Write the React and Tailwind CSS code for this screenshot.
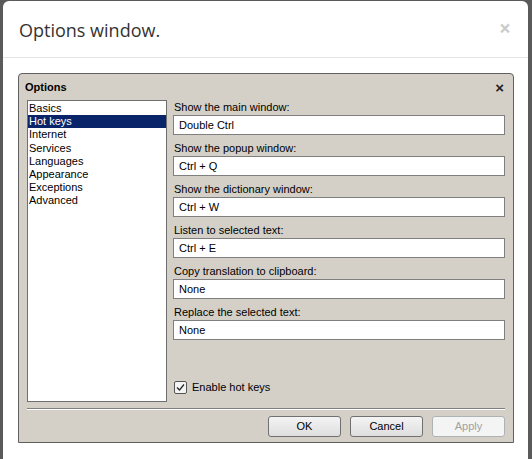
import { useState } from 'react';

const items = ['Basics', 'Hot keys', 'Internet', 'Services', 'Languages', 'Appearance', 'Exceptions', 'Advanced'];

const fields = [
    ['Show the main window:', 'Double Ctrl'],
    ['Show the popup window:', 'Ctrl + Q'],
    ['Show the dictionary window:', 'Ctrl + W'],
    ['Listen to selected text:', 'Ctrl + E'],
    ['Copy translation to clipboard:', 'None'],
    ['Replace the selected text:', 'None'],
];

const App = () => {
    const [selected, setSelected] = useState(1);
    const [enabled, setEnabled] = useState(true);

    return (
        <div className="w-[532px] h-[459px] bg-[#5a5a5a] overflow-hidden pt-[1px] pl-[3px]">
            <div className="w-[525px] h-[470px] bg-white rounded-[6px] font-['Open_Sans',sans-serif]">
                {/* Header */}
                <div className="h-[57px] border-b border-[#e5e5e5] px-[16px] flex items-center justify-between">
                    <h1 className="text-[18px] text-[#333] leading-[26px] mt-[2px]">Options window.</h1>
                    <span className="text-[21px] font-bold text-black opacity-20 leading-none mr-[1px] -mt-[1px]">×</span>
                </div>

                {/* Body */}
                <div className="p-[15px]">
                    <div className="w-[496px] h-[370px] bg-[#d4d0c8] border border-[#5f5f5f] rounded-t-[4px] flex flex-col font-['Liberation_Sans',Arial,sans-serif] text-[11px] text-black">
                        <div className="h-[26px] flex items-center justify-between pl-[6px] pr-[9px]">
                            <span className="font-bold">Options</span>
                            <span className="font-bold text-[15px] leading-none text-[#222]">×</span>
                        </div>

                        <div className="flex px-[8px] gap-[6px]">
                            <ul className="w-[140px] h-[302px] bg-white border border-[#6f6f6f] pt-[1px]">
                                {items.map((it, i) => (
                                    <li
                                        key={it}
                                        onClick={() => setSelected(i)}
                                        className={`h-[13.2px] leading-[13px] px-[1px] ${selected === i ? 'bg-[#0a246a] text-white' : ''}`}
                                    >
                                        {it}
                                    </li>
                                ))}
                            </ul>

                            <div className="flex-1 flex flex-col">
                                {fields.map(([label, value]) => (
                                    <div key={label} className="mb-[6px]">
                                        <div className="h-[14px] leading-[14px] mb-[1px] pl-[1px]">{label}</div>
                                        <div className="h-[20px] bg-white border border-[#7f7f7f] leading-[18px] px-[5px]">{value}</div>
                                    </div>
                                ))}

                                <label className="flex items-center gap-[5px] mt-[33px] pl-[1px]" onClick={() => setEnabled(!enabled)}>
                                    <span className="w-[13px] h-[13px] border border-[#555] rounded-[2px] bg-[#f4f4f4] flex items-center justify-center">
                                        {enabled && (
                                            <svg width="9" height="9" viewBox="0 0 9 9">
                                                <path d="M1 4.5 L3.5 7 L8 1.5" stroke="#222" strokeWidth="1.2" fill="none" />
                                            </svg>
                                        )}
                                    </span>
                                    <span>Enable hot keys</span>
                                </label>
                            </div>
                        </div>

                        <div className="mx-[8px] mt-[6px] border-t border-[#808080] border-b border-b-white" />

                        <div className="flex justify-end gap-[9px] pr-[8px] mt-[6px]">
                            <button className="w-[73px] h-[21px] rounded-[3px] border border-[#707070] bg-gradient-to-b from-[#f4f4f4] to-[#dedede]">OK</button>
                            <button className="w-[73px] h-[21px] rounded-[3px] border border-[#707070] bg-gradient-to-b from-[#f4f4f4] to-[#dedede]">Cancel</button>
                            <button className="w-[73px] h-[21px] rounded-[3px] border border-[#adb2b5] bg-[#f4f4f4] text-[#a0a0a0]">Apply</button>
                        </div>
                    </div>
                </div>
            </div>
        </div>
    );
};

export default App;
